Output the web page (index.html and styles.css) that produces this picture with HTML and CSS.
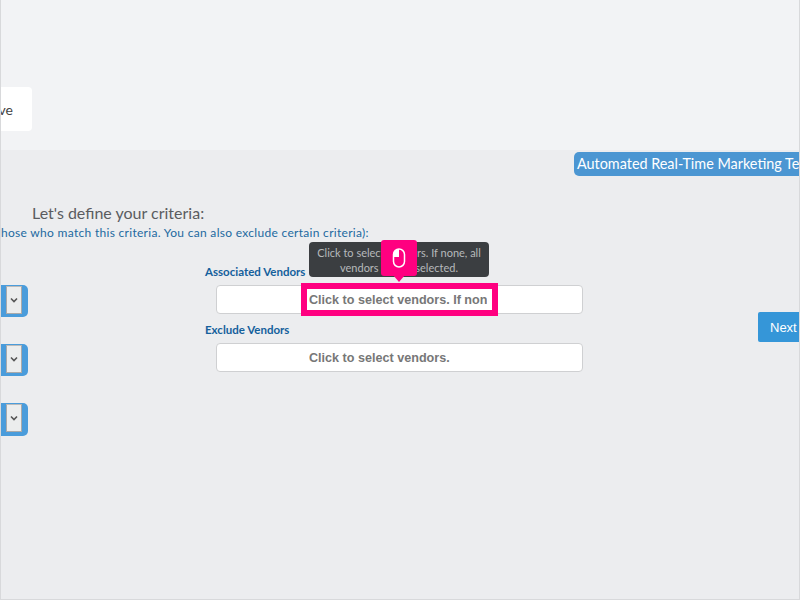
FILE: index.html
```html
<!DOCTYPE html>
<html lang="en">
<head>
<meta charset="utf-8">
<title>Define criteria</title>
<link rel="stylesheet" href="styles.css">
</head>
<body>
<div class="frame">
  <section class="top">
    <div class="save-card"><span>Save</span></div>
  </section>
  <section class="lower">
    <div class="tag-row"><div class="tag">Automated Real-Time Marketing Templates</div></div>
    <div class="intro">
      <h2 class="heading">Let's define your criteria:</h2>
      <p class="sub">hose who match this criteria. You can also exclude certain criteria):</p>
    </div>
    <div class="form">
      <div class="selects">
        <div class="select"><span class="select-btn"><svg class="chev" viewBox="0 0 8 6"><path d="M1 1.5 4 4.5 7 1.5" /></svg></span></div>
        <div class="select"><span class="select-btn"><svg class="chev" viewBox="0 0 8 6"><path d="M1 1.5 4 4.5 7 1.5" /></svg></span></div>
        <div class="select select-last"><span class="select-btn"><svg class="chev" viewBox="0 0 8 6"><path d="M1 1.5 4 4.5 7 1.5" /></svg></span></div>
      </div>
      <div class="vendors">
        <label class="label">Associated Vendors</label>
        <div class="input"><span class="input-text">Click to select vendors. If none, all vendors will be selected.</span></div>
        <label class="label label-second">Exclude Vendors</label>
        <div class="input"><span class="input-text">Click to select vendors.</span></div>
        <div class="tooltip">Click to select vendors. If none, all vendors will be selected.</div>
        <div class="highlight"></div>
        <div class="pin">
          <svg class="mouse" viewBox="0 0 14 20">
            <rect x="1.5" y="1" width="11" height="18" rx="5.5" fill="none" stroke="#fff" stroke-width="1.5"/>
            <path d="M7 1A5.5 5.5 0 0 0 1.5 6.5V9H7Z" fill="#fff"/>
          </svg>
        </div>
      </div>
      <button class="next">Next</button>
    </div>
  </section>
</div>
</body>
</html>
```
FILE: styles.css
```css
html, body { margin: 0; padding: 0; }
body { width: 800px; height: 600px; overflow: hidden; font-family: Lato, "Noto Sans", sans-serif; }
.frame {
  box-sizing: border-box; width: 800px; height: 600px; overflow: hidden;
  border: 1px solid #d8d9db; border-top: 0;
  display: flex; flex-direction: column; background: #ecedef;
}
.top { height: 150px; flex: none; background: #f2f3f5; padding-top: 87px; box-sizing: border-box; }
.save-card {
  width: 40px; height: 44px; margin-left: -28px; background: #fff; border-radius: 4px;
  display: flex; align-items: center; justify-content: flex-end; padding-right: 19px;
  font-size: 14px; color: #444;
}
.lower { flex: 1; min-height: 0; position: relative; }
.tag-row { display: flex; justify-content: flex-end; padding-top: 2px; margin-right: -1px; overflow: hidden; }
.tag {
  flex: none; width: 226px; height: 24px; box-sizing: border-box; padding-left: 3px;
  background: #4b96d2; color: #fff; font-size: 14.4px; line-height: 23px;
  border-radius: 5px 0 0 5px; white-space: nowrap; overflow: hidden;
}
.intro { padding-top: 26px; }
.heading { margin: 0 0 0 31px; font-size: 16px; line-height: 22px; font-weight: 400; color: #5a5c5f; white-space: nowrap; }
.sub { margin: 0; font-size: 12px; line-height: 17px; letter-spacing: 0.3px; color: #22699f; white-space: nowrap; }
.form { display: flex; align-items: flex-start; margin-top: 44px; }
.selects { flex: none; width: 27px; display: flex; flex-direction: column; gap: 27px; }
.select {
  height: 32px; box-sizing: border-box; background: #4a9cdb; border-radius: 0 5px 5px 0;
  padding: 1px 0 2px 5px;
}
.select-last { height: 33px; padding-bottom: 3px; }
.select-btn {
  display: flex; width: 16px; height: 28px; box-sizing: border-box;
  align-items: center; justify-content: center; background: #eceded;
  border: 1px solid #aaa; border-top-color: #bbb;
}
.chev { width: 8px; height: 6px; fill: none; stroke: #555; stroke-width: 1.6; }
.vendors { flex: none; width: 367px; margin-left: 188px; margin-top: -20px; position: relative; }
.label { display: block; margin-left: -11px; font-size: 11.5px; line-height: 14px; font-weight: 700; color: #14609c; height: 20px; white-space: nowrap; }
.label-second { margin-top: 9px; }
.input {
  height: 29px; box-sizing: border-box; background: #fff; border: 1px solid #cfd0d2; border-radius: 4px;
  padding-left: 92px; font-family: "Liberation Sans", Arial, sans-serif; font-weight: 700; font-size: 12.6px;
  line-height: 28px; color: #777;
}
.input-text { display: block; width: 178px; overflow: hidden; white-space: nowrap; }
.tooltip {
  position: absolute; left: 93px; top: -23px; width: 180px; height: 35px; box-sizing: border-box;
  padding: 3px 6px; background: #3b3e41; color: #b6b9bb; border-radius: 4px;
  font-size: 11px; line-height: 15px; text-align: center;
}
.highlight { position: absolute; left: 85px; top: 18px; width: 197px; height: 33px; box-sizing: border-box; border: 6px solid #ff0080; }
.pin {
  position: absolute; left: 165px; top: -25px; width: 36px; height: 36px; background: #ff0080; border-radius: 3px;
  display: flex; align-items: center; justify-content: center;
}
.pin::after {
  content: ""; position: absolute; left: 12px; bottom: -6px; width: 0; height: 0;
  border-left: 6px solid transparent; border-right: 6px solid transparent; border-top: 7px solid #ff0080;
}
.mouse { width: 14px; height: 20px; }
.next {
  flex: none; width: 42px; height: 30px; margin-left: auto; margin-top: 27px; margin-right: -1px; padding: 0 0 0 12px; border: 0;
  background: #3596d8; color: #fff; border-radius: 2px 0 0 2px; text-align: left;
  font-family: "Liberation Sans", Arial, sans-serif; font-size: 13px;
}
```
